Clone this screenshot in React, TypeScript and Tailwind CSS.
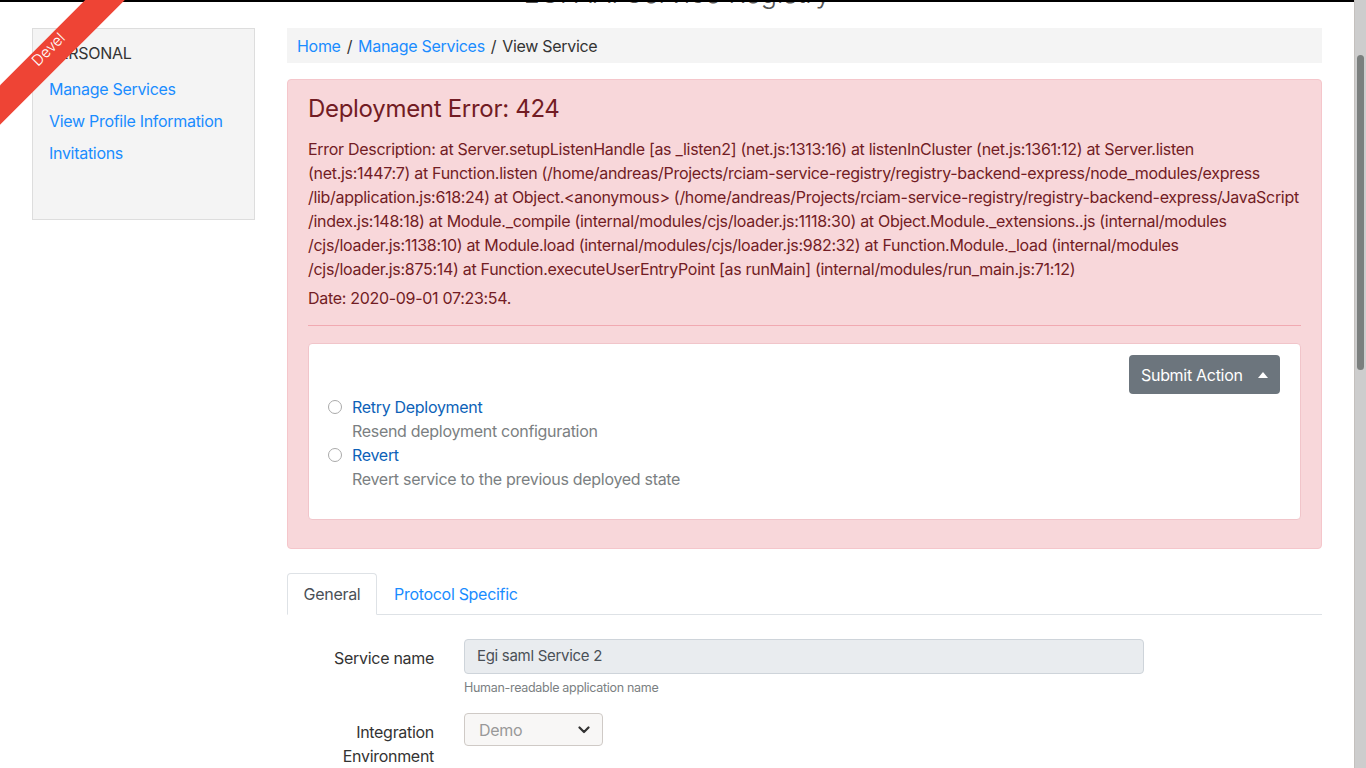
import React from "react";

const font = { fontFamily: "Inter, 'Noto Sans', sans-serif" };

const lines = [
  "at Server.setupListenHandle [as _listen2] (net.js:1313:16) at listenInCluster (net.js:1361:12) at Server.listen",
  "(net.js:1447:7) at Function.listen (/home/andreas/Projects/rciam-service-registry/registry-backend-express/node_modules/express",
  "/lib/application.js:618:24) at Object.<anonymous> (/home/andreas/Projects/rciam-service-registry/registry-backend-express/JavaScript",
  "/index.js:148:18) at Module._compile (internal/modules/cjs/loader.js:1118:30) at Object.Module._extensions..js (internal/modules",
  "/cjs/loader.js:1138:10) at Module.load (internal/modules/cjs/loader.js:982:32) at Function.Module._load (internal/modules",
  "/cjs/loader.js:875:14) at Function.executeUserEntryPoint [as runMain] (internal/modules/run_main.js:71:12)",
];

function Radio({ title, desc }: { title: string; desc: string }) {
  return (
    <div className="flex">
      <div className="w-[24px] pt-[5px]">
        <div className="w-[14px] h-[14px] rounded-full border border-[#aaa] bg-white" />
      </div>
      <div>
        <div className="text-[16px] leading-[24px] text-[#0d62b8]">{title}</div>
        <div className="text-[16px] leading-[24px] text-[#7b7f82]">{desc}</div>
      </div>
    </div>
  );
}

export default function App() {
  return (
    <div className="flex h-[768px] w-[1366px] overflow-hidden bg-white text-[#333] tracking-[-0.3px]" style={font}>
      <div className="relative flex-1 min-w-0 border-t-[2px] border-black">
        {/* ribbon */}
        <div className="absolute left-[-48px] top-[37px] w-[200px] h-[28px] -rotate-45 bg-[#ee4435] flex items-center justify-center text-white text-[15px] font-light tracking-normal pb-[9px] z-10">
          Devel
        </div>
        <div className="h-[26px] overflow-hidden relative">
          <div className="-mt-[26px] text-center text-[27px] leading-[36px] font-light text-[#555] tracking-normal">
            EGI AAI Service Registry
          </div>
        </div>
        <div className="flex gap-[32px] px-[32px]">
          <div className="w-[223px] shrink-0">
            <div className="h-[192px] bg-[#f4f4f4] border border-[#ddd] pt-[12px] px-[16px]">
              <div className="text-[16px] leading-[24px] text-[#333] uppercase">Personal</div>
              <div className="mt-[12px] flex flex-col gap-[8px] text-[16px] leading-[24px] text-[#1a8cff]">
                <span>Manage Services</span>
                <span>View Profile Information</span>
                <span>Invitations</span>
              </div>
            </div>
          </div>
          <div className="flex-1 min-w-0">
            <div className="h-[35px] bg-[#f4f4f4] flex items-center px-[10px] text-[16px]">
              <span className="text-[#1a8cff]">Home</span>
              <span className="px-[6px] text-[#333]">/</span>
              <span className="text-[#1a8cff]">Manage Services</span>
              <span className="px-[6px] text-[#333]">/</span>
              <span className="text-[#333]">View Service</span>
            </div>
            <div className="mt-[16px] bg-[#f8d7da] border border-[#f5c6cb] rounded-[4px] px-[20px] pt-[14px] pb-[28px] text-[#721c24]">
              <div className="text-[24px] leading-[29px]">Deployment Error: 424</div>
              <div className="mt-[14px] text-[16px] leading-[24px]">
                {lines.map((l, i) => (
                  <div key={i} className="whitespace-nowrap">
                    {i === 0 ? <span>Error Description: </span> : null}
                    {l}
                  </div>
                ))}
              </div>
              <div className="mt-[5px] text-[16px] leading-[24px]">Date: 2020-09-01 07:23:54.</div>
              <div className="mt-[15px] border-t border-[#f1a9b1]" />
              <div className="mt-[17px] bg-white border border-[#f1c5ca] rounded-[4px] h-[177px] px-[20px] pt-[11px]">
                <div className="flex justify-end">
                  <div className="h-[39px] w-[151px] bg-[#6c757d] rounded-[4px] flex items-center pl-[12px] pr-[12px] text-white text-[16px]">
                    <span className="flex-1">Submit Action</span>
                    <svg width="10" height="6" viewBox="0 0 10 6"><path d="M0 6 L5 0 L10 6 Z" fill="white" /></svg>
                  </div>
                </div>
                <div className="flex flex-col pt-[1px] -ml-px">
                  <Radio title="Retry Deployment" desc="Resend deployment configuration" />
                  <Radio title="Revert" desc="Revert service to the previous deployed state" />
                </div>
              </div>
            </div>
            <div className="mt-[24px] flex border-b border-[#dee2e6] h-[42px]">
              <div className="w-[90px] h-[42px] border border-[#dee2e6] border-b-white rounded-t-[4px] bg-white flex items-center justify-center text-[16px] text-[#495057] -mb-px">
                General
              </div>
              <div className="px-[17px] flex items-center text-[16px] text-[#1a8cff]">Protocol Specific</div>
            </div>
            <div className="mt-[24px] flex">
              <div className="w-[147px] text-right pt-[7px] text-[16px] leading-[24px] text-[#333]">Service name</div>
              <div className="ml-[30px] w-[680px]">
                <div className="h-[35px] bg-[#e9ecef] border border-[#ced4da] rounded-[4px] flex items-center px-[12px] text-[15px] text-[#495057]">
                  Egi saml Service 2
                </div>
                <div className="mt-[6px] text-[12.5px] leading-[16px] text-[#7b7f82]">Human-readable application name</div>
              </div>
            </div>
            <div className="mt-[17px] flex">
              <div className="w-[147px] text-right pt-[7px] text-[16px] leading-[24px] text-[#333]">
                Integration
                <br />
                Environment
              </div>
              <div className="ml-[30px]">
                <div className="h-[33px] w-[139px] bg-[#f8f7f6] border border-[#cfcac6] rounded-[4px] flex items-center pl-[14px] pr-[12px] text-[16px] text-[#999]">
                  <span className="flex-1">Demo</span>
                  <svg width="12" height="8" viewBox="0 0 12 8"><path d="M1.5 1.5 L6 6 L10.5 1.5" stroke="#333" strokeWidth="2.2" fill="none" strokeLinecap="round" strokeLinejoin="round" /></svg>
                </div>
              </div>
            </div>
          </div>
        </div>
      </div>
      <div className="w-[12px] shrink-0 bg-[#cdcdcd] border-l border-[#c4c0bd] pt-[55px] flex justify-center">
        <div className="w-[7px] h-[315px] rounded-full bg-[#7b7f7e]" />
      </div>
    </div>
  );
}
